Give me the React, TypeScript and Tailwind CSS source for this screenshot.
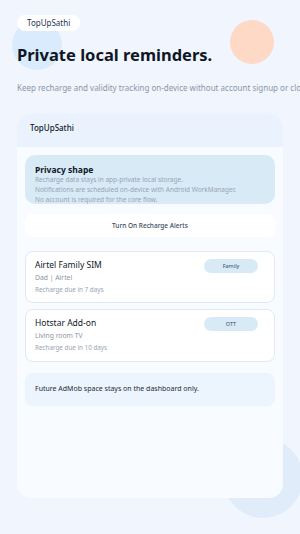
import React from "react";

export default function App() {
  return (
    <div className="relative h-[534px] w-[300px] overflow-hidden bg-[#f1f6fe] font-['Noto_Sans',sans-serif]">
      <div className="absolute left-[12px] top-[20px] h-[50px] w-[50px] rounded-full bg-[#d9ebfc]" />
      <div className="absolute left-[230px] top-[20px] h-[44px] w-[44px] rounded-full bg-[#fdd9c6]" />
      <div className="absolute left-[223px] top-[438px] h-[80px] w-[80px] rounded-full bg-[#e0ecfa]" />

      <div className="relative flex flex-col px-[17px] pt-[15px]">
        <div className="flex">
          <div className="flex h-[16px] items-center rounded-full bg-white px-[10px] text-[8px] leading-none text-[#1e3553]">
            TopUpSathi
          </div>
        </div>
        <h1 className="mt-[12px] text-[16.5px] font-bold leading-[24px] text-[#0f1626]">
          Private local reminders.
        </h1>
        <p className="mt-[16px] whitespace-nowrap text-[8px] leading-[10px] text-[#8b95a5]">
          Keep recharge and validity tracking on-device without account signup or cloud
        </p>

        <div className="mt-[21px] flex h-[384px] w-[266px] flex-col overflow-hidden rounded-[14px] bg-[#f8fbff]">
          <div className="flex h-[33px] items-center bg-[#eaf3fd] pb-[6px] pl-[13px] text-[8px] font-medium text-[#111827]">
            TopUpSathi
          </div>
          <div className="flex flex-col px-[8px]">
            <div className="mt-[8px] h-[49px] overflow-hidden rounded-[10px] bg-[#d9eaf7] px-[10px] pt-[9px]">
              <div className="text-[8.5px] font-bold leading-[11px] text-[#111827]">Privacy shape</div>
              <div className="text-[6.5px] leading-[10px] text-[#98a3b3]">
                <div>Recharge data stays in app-private local storage.</div>
                <div>Notifications are scheduled on-device with Android WorkManager.</div>
                <div>No account is required for the core flow.</div>
              </div>
            </div>

            <div className="mt-[10px] flex h-[23px] items-center justify-center rounded-[8px] bg-white text-[6.5px] font-medium text-[#3a4a60]">
              Turn On Recharge Alerts
            </div>

            <div className="mt-[14px] flex h-[52px] justify-between rounded-[8px] border border-[#dfe8f3] bg-white pl-[9px] pr-[16px] pt-[7px]">
              <div className="flex flex-col">
                <div className="text-[8.5px] leading-[12px] text-[#111827]">Airtel Family SIM</div>
                <div className="mt-[1px] text-[6.8px] leading-[11px] text-[#8b95a5]">Dad | Airtel</div>
                <div className="mt-[2px] text-[6.3px] leading-[10px] text-[#9aa4b3]">Recharge due in 7 days</div>
              </div>
              <div className="flex h-[14px] w-[54px] items-center justify-center rounded-full bg-[#d9eaf7] text-[5.5px] text-[#3a4a60]">
                Family
              </div>
            </div>

            <div className="mt-[6px] flex h-[53px] justify-between rounded-[8px] border border-[#dfe8f3] bg-white pl-[9px] pr-[16px] pt-[7px]">
              <div className="flex flex-col">
                <div className="text-[8.5px] leading-[12px] text-[#111827]">Hotstar Add-on</div>
                <div className="mt-[1px] text-[6.8px] leading-[11px] text-[#8b95a5]">Living room TV</div>
                <div className="mt-[2px] text-[6.3px] leading-[10px] text-[#9aa4b3]">Recharge due in 10 days</div>
              </div>
              <div className="flex h-[14px] w-[54px] items-center justify-center rounded-full bg-[#d9eaf7] text-[5.5px] text-[#3a4a60]">
                OTT
              </div>
            </div>

            <div className="mt-[11px] flex h-[33px] items-center rounded-[8px] bg-[#ecf4fe] pl-[10px] text-[7px] text-[#1f2937]">
              Future AdMob space stays on the dashboard only.
            </div>
          </div>
        </div>
      </div>
    </div>
  );
}
